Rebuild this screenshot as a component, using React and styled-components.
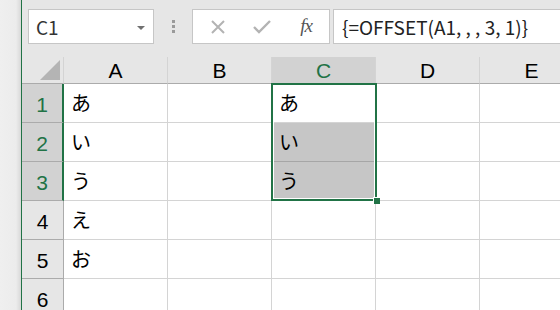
import styled, { createGlobalStyle } from "styled-components";

const GlobalStyle = createGlobalStyle`
  html, body {
    margin: 0;
    padding: 0;
    background: #e6e6e6;
    overflow: hidden;
  }
`;

const GREEN = "#217346";
const COLS = ["A", "B", "C", "D", "E"];
const ROWS = [1, 2, 3, 4, 5, 6];
const DATA = { A: ["あ", "い", "う", "え", "お"], C: ["あ", "い", "う"] };

const Window = styled.div`
  display: flex;
  width: 560px;
  height: 310px;
  overflow: hidden;
`;

const SideStrip = styled.div`
  flex: 0 0 21px;
  background: linear-gradient(to right, #efefef 0, #ececec 16px, #d8d8d8 21px);
  border-right: 1px solid ${GREEN};
`;

const Main = styled.div`
  flex: 1;
  display: flex;
  flex-direction: column;
  min-width: 0;
`;

const Toolbar = styled.div`
  flex-shrink: 0;
  display: flex;
  align-items: flex-start;
  height: 57px;
  padding: 9px 0 0 6px;
  box-sizing: border-box;
  background: #e6e6e6;
`;

const Box = styled.div`
  display: flex;
  align-items: center;
  height: 35px;
  box-sizing: border-box;
  background: #fff;
  border: 1px solid #c6c6c6;
`;

const NameBox = styled(Box)`
  width: 126px;
  padding: 0 8px 0 7px;
  justify-content: space-between;
  font-family: "Noto Sans CJK JP", "Liberation Sans", sans-serif;
  font-size: 19px;
  color: #333;
`;

const Caret = styled.span`
  width: 0;
  height: 0;
  border-left: 4px solid transparent;
  border-right: 4px solid transparent;
  border-top: 4px solid #707070;
  margin-top: 2px;
`;

const Grip = styled.div`
  display: flex;
  flex-direction: column;
  gap: 2px;
  width: 38px;
  align-items: center;
  padding-top: 11px;

  span {
    width: 3px;
    height: 3px;
    background: #9a9a9a;
  }
`;

const ButtonBox = styled(Box)`
  width: 138px;
  padding: 0 10px 0 12px;
  justify-content: space-between;
`;

const IconButton = styled.span`
  display: flex;
  align-items: center;
  justify-content: center;
  width: 26px;
  height: 26px;
`;

const Fx = styled.span`
  font-family: "Liberation Serif", serif;
  font-style: italic;
  font-size: 19px;
  color: #555;
  letter-spacing: -1px;
  padding-bottom: 2px;
`;

const FormulaBox = styled(Box)`
  flex: 1;
  margin-left: 3px;
  border-right: none;
  padding-left: 8px;
  font-family: "Noto Sans CJK JP", "Liberation Sans", sans-serif;
  font-size: 19px;
  color: #222;
  white-space: nowrap;
`;

const Sheet = styled.div`
  flex-shrink: 0;
  position: relative;
  display: grid;
  grid-template-columns: 42px repeat(5, 104px);
  grid-template-rows: 27px repeat(6, 39px);
  background: #fff;
`;

const Corner = styled.div`
  position: relative;
  background: #e6e6e6;
  border-right: 1px solid #d4d4d4;
  border-bottom: 1px solid #ababab;

  &::after {
    content: "";
    position: absolute;
    right: 3px;
    bottom: 3px;
    width: 0;
    height: 0;
    border-left: 20px solid transparent;
    border-bottom: 20px solid #b4b4b4;
  }
`;

const ColHead = styled.div`
  display: flex;
  align-items: center;
  justify-content: center;
  box-sizing: border-box;
  background: ${(p) => (p.$active ? "#d2d2d2" : "#e6e6e6")};
  color: ${(p) => (p.$active ? GREEN : "#000")};
  border-right: 1px solid #d4d4d4;
  border-bottom: 1px solid #ababab;
  font-family: "Liberation Sans", Arial, sans-serif;
  font-size: 21px;
  padding-top: 1px;
`;

const RowHead = styled.div`
  display: flex;
  align-items: flex-end;
  justify-content: center;
  box-sizing: border-box;
  padding-bottom: 5px;
  background: ${(p) => (p.$active ? "#d2d2d2" : "#e6e6e6")};
  color: ${(p) => (p.$active ? GREEN : "#000")};
  border-right: ${(p) => (p.$active ? `2px solid ${GREEN}` : "1px solid #ababab")};
  border-bottom: 1px solid #ababab;
  font-family: "Liberation Sans", Arial, sans-serif;
  font-size: 21px;
  line-height: 24px;
`;

const Cell = styled.div`
  display: flex;
  align-items: center;
  box-sizing: border-box;
  padding: 0 0 2px 7px;
  background: ${(p) => (p.$range ? "#c6c6c6" : "#fff")};
  border-right: 1px solid #d4d4d4;
  border-bottom: 1px solid ${(p) => (p.$range ? "#a6a6a6" : "#d4d4d4")};
  font-family: "Noto Sans CJK JP", sans-serif;
  font-size: 20px;
  color: #000;
`;

const Selection = styled.div`
  position: absolute;
  left: 249px;
  top: 26px;
  width: 106px;
  height: 118px;
  box-sizing: border-box;
  border: 2px solid ${GREEN};
  box-shadow: inset 0 0 0 1px #fff;
  pointer-events: none;
`;

const FillHandle = styled.span`
  position: absolute;
  right: -5px;
  bottom: -5px;
  width: 6px;
  height: 6px;
  background: ${GREEN};
  border: 1px solid #fff;
  border-right: none;
  border-bottom: none;
`;

function CancelIcon() {
  return (
    <svg width="18" height="18" viewBox="0 0 18 18">
      <path d="M3 3 L15 15 M15 3 L3 15" stroke="#b3b3b3" strokeWidth="2" fill="none" />
    </svg>
  );
}

function CheckIcon() {
  return (
    <svg width="20" height="18" viewBox="0 0 20 18">
      <path d="M2 9 L7 14 L18 3" stroke="#b3b3b3" strokeWidth="2.4" fill="none" />
    </svg>
  );
}

export default function App() {
  return (
    <>
      <GlobalStyle />
      <Window>
        <SideStrip />
        <Main>
          <Toolbar>
            <NameBox>
              <span>C1</span>
              <Caret />
            </NameBox>
            <Grip>
              <span />
              <span />
              <span />
            </Grip>
            <ButtonBox>
              <IconButton>
                <CancelIcon />
              </IconButton>
              <IconButton>
                <CheckIcon />
              </IconButton>
              <IconButton>
                <Fx>fx</Fx>
              </IconButton>
            </ButtonBox>
            <FormulaBox>{"{=OFFSET(A1, , , 3, 1)}"}</FormulaBox>
          </Toolbar>
          <Sheet>
            <Corner />
            {COLS.map((c) => (
              <ColHead key={c} $active={c === "C"}>
                {c}
              </ColHead>
            ))}
            {ROWS.map((r) => (
              <Row key={r} r={r} />
            ))}
            <Selection>
              <FillHandle />
            </Selection>
          </Sheet>
        </Main>
      </Window>
    </>
  );
}

function Row({ r }) {
  return (
    <>
      <RowHead $active={r <= 3}>{r}</RowHead>
      {COLS.map((c) => (
        <Cell key={c} $range={c === "C" && (r === 2 || r === 3)}>
          {(DATA[c] || [])[r - 1] || ""}
        </Cell>
      ))}
    </>
  );
}
